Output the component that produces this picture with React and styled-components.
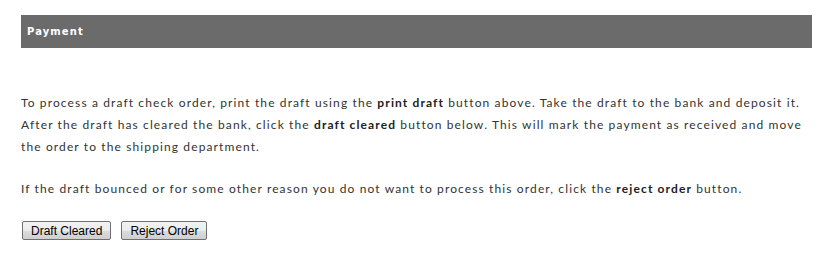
import styled, { createGlobalStyle } from "styled-components";

const GlobalStyle = createGlobalStyle`
  body {
    margin: 0;
    background: #fff;
  }
`;

const Page = styled.div`
  padding: 15px 15px 0 21px;
  font-family: Lato, "Open Sans", sans-serif;
`;

const Header = styled.div`
  background: #6b6b6b;
  height: 33px;
  display: flex;
  align-items: center;
  padding-left: 6px;
  color: #fff;
  font-family: "DejaVu Sans", Verdana, sans-serif;
  font-size: 10px;
  font-weight: bold;
  letter-spacing: 1.1px;
`;

const Body = styled.div`
  padding-top: 44px;
`;

const Para = styled.p`
  margin: 0 0 20px;
  font-size: 12px;
  line-height: 22px;
  letter-spacing: 1.12px;
  color: #333;

  b {
    font-weight: bold;
    color: #222;
  }
`;

const Actions = styled.div`
  display: flex;
  gap: 10px;
  padding: 1px 0 0 1px;
`;

const Button = styled.button`
  font-family: Arial, "Liberation Sans", sans-serif;
  font-size: 12px;
  height: 19px;
  padding: 0 8px;
  border: 1px solid #707070;
  border-radius: 2px;
  color: #000;
  background: linear-gradient(#f2f2f2 0%, #ebebeb 50%, #dddddd 51%, #cfcfcf 100%);
  cursor: pointer;
`;

export default function App() {
  return (
    <>
      <GlobalStyle />
      <Page>
        <Header>Payment</Header>
        <Body>
          <Para>
            To process a draft check order, print the draft using the <b>print draft</b> button above. Take the draft to
            the bank and deposit it. After the draft has cleared the bank, click the <b>draft cleared</b> button below.
            This will mark the payment as received and move the order to the shipping department.
          </Para>
          <Para>
            If the draft bounced or for some other reason you do not want to process this order, click the{" "}
            <b>reject order</b> button.
          </Para>
          <Actions>
            <Button>Draft Cleared</Button>
            <Button>Reject Order</Button>
          </Actions>
        </Body>
      </Page>
    </>
  );
}
